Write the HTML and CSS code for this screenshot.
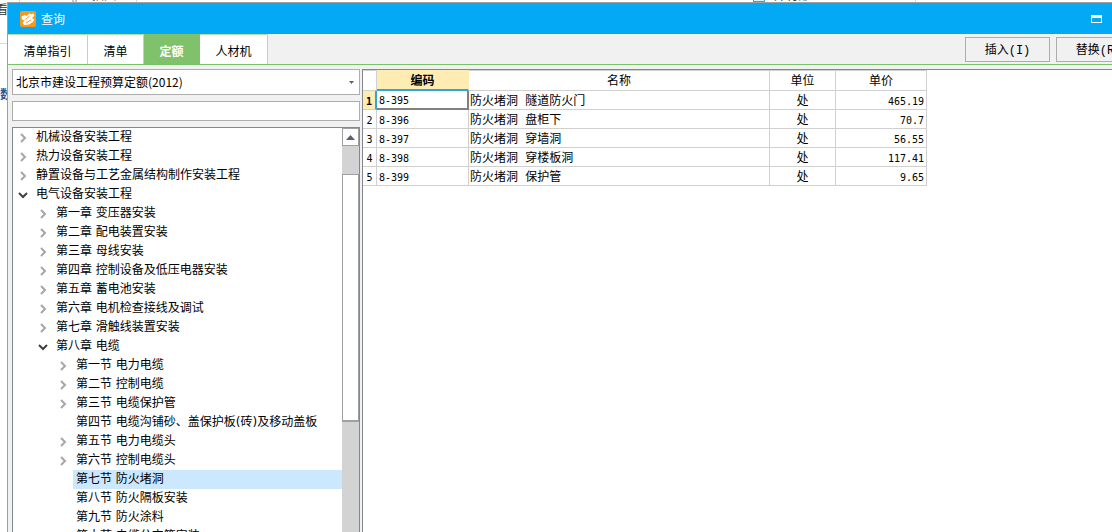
FILE: index.html
```
<!DOCTYPE html>
<html lang="zh-CN">
<head>
<meta charset="utf-8">
<title>查询</title>
<link rel="stylesheet" href="styles.css">
</head>
<body>
<div class="desk">
  <div class="behind-top" aria-hidden="true">
    <span class="group group-a"></span><span class="group group-b"></span><span class="group group-c">插入</span>
    <span class="group group-d"><i class="chip"></i>外材部</span>
  </div>
  <div class="behind-left" aria-hidden="true">
    <span class="behind-tab">看</span>
    <span class="behind-name">数</span>
  </div>
  <main class="window">
    <header class="titlebar">
      <svg class="logo" viewBox="0 0 16 16" aria-hidden="true"><rect width="16" height="16" rx="2" fill="#f79a1c"/><path d="M1.500 5.500 5 4l1.500 1L9.500 2.500l1.500 1L13 2.500l1.500 2L12 7l2 1.500-1 2.500-4 2.500-5 .5-1.500-2L4.500 9.500 2 8.500z" fill="#fff"/><path d="M5.500 8.500 9.500 5M6 12l5-3" stroke="#f79a1c" stroke-width="1" fill="none"/></svg>
      <h1 class="title">查询</h1>
      <button class="restore" aria-label="最大化"><svg viewBox="0 0 11 8"><path d="M0 0h11v8H0zM1 3v4h9V3z" fill="#fff" fill-rule="evenodd"/></svg></button>
    </header>
    <div class="toolbar">
      <nav class="tabs">
        <button class="tab tab-wide">清单指引</button>
        <button class="tab">清单</button>
        <button class="tab active">定额</button>
        <button class="tab">人材机</button>
      </nav>
      <div class="actions">
        <button class="action">插入(I)</button>
        <button class="action">替换(R)</button>
      </div>
    </div>
    <div class="content">
      <aside class="side">
        <div class="picker">
          <select class="library" aria-label="定额库"><option>北京市建设工程预算定额(2012)</option></select>
          <svg class="caret" viewBox="0 0 5 3" aria-hidden="true"><path d="M0 0h5L2.500 3z" fill="#5c5f70"/></svg>
        </div>
        <input class="search" type="text" aria-label="搜索">
        <div class="treebox">
          <ul class="tree">
            <li class="node"><svg class="arrow" viewBox="0 0 10 10"><path d="m3 1 4 4-4 4"/></svg><span class="label">机械设备安装工程</span></li>
            <li class="node"><svg class="arrow" viewBox="0 0 10 10"><path d="m3 1 4 4-4 4"/></svg><span class="label">热力设备安装工程</span></li>
            <li class="node"><svg class="arrow" viewBox="0 0 10 10"><path d="m3 1 4 4-4 4"/></svg><span class="label">静置设备与工艺金属结构制作安装工程</span></li>
            <li class="node"><svg class="arrow open" viewBox="0 0 10 10"><path d="m1 3 4 4 4-4"/></svg><span class="label">电气设备安装工程</span></li>
            <li class="node l1"><svg class="arrow" viewBox="0 0 10 10"><path d="m3 1 4 4-4 4"/></svg><span class="label">第一章 变压器安装</span></li>
            <li class="node l1"><svg class="arrow" viewBox="0 0 10 10"><path d="m3 1 4 4-4 4"/></svg><span class="label">第二章 配电装置安装</span></li>
            <li class="node l1"><svg class="arrow" viewBox="0 0 10 10"><path d="m3 1 4 4-4 4"/></svg><span class="label">第三章 母线安装</span></li>
            <li class="node l1"><svg class="arrow" viewBox="0 0 10 10"><path d="m3 1 4 4-4 4"/></svg><span class="label">第四章 控制设备及低压电器安装</span></li>
            <li class="node l1"><svg class="arrow" viewBox="0 0 10 10"><path d="m3 1 4 4-4 4"/></svg><span class="label">第五章 蓄电池安装</span></li>
            <li class="node l1"><svg class="arrow" viewBox="0 0 10 10"><path d="m3 1 4 4-4 4"/></svg><span class="label">第六章 电机检查接线及调试</span></li>
            <li class="node l1"><svg class="arrow" viewBox="0 0 10 10"><path d="m3 1 4 4-4 4"/></svg><span class="label">第七章 滑触线装置安装</span></li>
            <li class="node l1"><svg class="arrow open" viewBox="0 0 10 10"><path d="m1 3 4 4 4-4"/></svg><span class="label">第八章 电缆</span></li>
            <li class="node l2"><svg class="arrow" viewBox="0 0 10 10"><path d="m3 1 4 4-4 4"/></svg><span class="label">第一节 电力电缆</span></li>
            <li class="node l2"><svg class="arrow" viewBox="0 0 10 10"><path d="m3 1 4 4-4 4"/></svg><span class="label">第二节 控制电缆</span></li>
            <li class="node l2"><svg class="arrow" viewBox="0 0 10 10"><path d="m3 1 4 4-4 4"/></svg><span class="label">第三节 电缆保护管</span></li>
            <li class="node l2"><svg class="arrow" viewBox="0 0 10 10"></svg><span class="label">第四节 电缆沟铺砂、盖保护板(砖)及移动盖板</span></li>
            <li class="node l2"><svg class="arrow" viewBox="0 0 10 10"><path d="m3 1 4 4-4 4"/></svg><span class="label">第五节 电力电缆头</span></li>
            <li class="node l2"><svg class="arrow" viewBox="0 0 10 10"><path d="m3 1 4 4-4 4"/></svg><span class="label">第六节 控制电缆头</span></li>
            <li class="node l2"><svg class="arrow" viewBox="0 0 10 10"></svg><span class="label selected">第七节 防火堵洞</span></li>
            <li class="node l2"><svg class="arrow" viewBox="0 0 10 10"></svg><span class="label">第八节 防火隔板安装</span></li>
            <li class="node l2"><svg class="arrow" viewBox="0 0 10 10"></svg><span class="label">第九节 防火涂料</span></li>
            <li class="node l2"><svg class="arrow" viewBox="0 0 10 10"></svg><span class="label">第十节 电缆分支箱安装</span></li>
          </ul>
          <div class="scroll">
            <button class="scroll-up" aria-label="向上滚动"><svg viewBox="0 0 9 5"><path d="M0 5 4.500 0 9 5z" fill="#5c5f70"/></svg></button>
            <div class="thumb"></div>
          </div>
        </div>
      </aside>
      <section class="results">
        <table class="grid">
          <colgroup><col class="c-no"><col class="c-code"><col class="c-name"><col class="c-unit"><col class="c-price"></colgroup>
          <thead><tr><th></th><th class="current">编码</th><th>名称</th><th>单位</th><th>单价</th></tr></thead>
          <tbody>
            <tr><td class="no current-row">1</td><td class="code focus">8-395</td><td>防火堵洞 隧道防火门</td><td class="unit">处</td><td class="price">465.19</td></tr>
            <tr><td class="no">2</td><td class="code">8-396</td><td>防火堵洞 盘柜下</td><td class="unit">处</td><td class="price">70.7</td></tr>
            <tr><td class="no">3</td><td class="code">8-397</td><td>防火堵洞 穿墙洞</td><td class="unit">处</td><td class="price">56.55</td></tr>
            <tr><td class="no">4</td><td class="code">8-398</td><td>防火堵洞 穿楼板洞</td><td class="unit">处</td><td class="price">117.41</td></tr>
            <tr><td class="no">5</td><td class="code">8-399</td><td>防火堵洞 保护管</td><td class="unit">处</td><td class="price">9.65</td></tr>
          </tbody>
        </table>
      </section>
    </div>
  </main>
</div>
</body>
</html>
```
FILE: styles.css
```
* { box-sizing: border-box; }
body {
  margin: 0;
  background: #fff;
  color: #000;
  font: 12px/18px "Noto Sans CJK SC", sans-serif;
}
button, input, select { font: inherit; color: inherit; margin: 0; padding: 0; border-radius: 0; }
svg { display: block; }

.desk {
  display: grid;
  grid-template: 2px minmax(0, 1fr) / 7px minmax(0, 1fr);
  height: 100vh;
  overflow: hidden;
}
.behind-top {
  grid-column: 1 / 3;
  display: flex;
  align-items: flex-end;
  overflow: hidden;
  color: #333;
}
.group { display: flex; flex: none; align-items: flex-end; height: 16px; border-right: 1px solid #d8d8d8; line-height: 14px; }
.group-a { width: 20px; }
.group-b { width: 57px; border-right: 5px double #c4c4c4; }
.group-c { width: 60px; padding-left: 15px; }
.group-d { width: 779px; padding-left: 616px; }
.chip { width: 12px; height: 12px; margin-right: 9px; border: 1px solid #25aee0; background: #d9f1fb; }
.behind-left { overflow: hidden; }
.behind-tab { display: block; height: 42px; margin-left: -4px; border-bottom: 1px solid #d8d8d8; color: #333; line-height: 14px; }
.behind-name { display: block; margin-top: 41px; color: #245a9b; font-weight: bold; }

.window {
  display: flex;
  flex-direction: column;
  min-width: 0;
  border-top: 1px solid #a0a0a0;
  border-left: 1px solid #a0a0a0;
  background: #f1f1f1;
  overflow: hidden;
}
.titlebar {
  display: flex;
  flex: none;
  align-items: center;
  height: 31px;
  padding: 0 10px 0 12px;
  background: #03a9f4;
  color: #fff;
}
.logo { width: 16px; height: 16px; }
.title { margin: 0 0 0 5px; font-size: 12px; font-weight: normal; }
.restore { margin-left: auto; border: 0; background: none; }
.restore svg { width: 11px; height: 8px; }

.toolbar {
  display: flex;
  flex: none;
  justify-content: space-between;
  align-items: center;
  height: 31px;
  border-bottom: 1px solid #78c369;
}
.tabs { display: flex; height: 30px; }
.tab {
  width: 56px;
  padding-top: 2px;
  border: solid #b5e0a5;
  border-width: 1px 1px 0 0;
  background: #fff;
}
.tab-wide { width: 80px; }
.tab:last-child { width: 68px; }
.tab.active { border-color: #80c26b; background: #80c26b; color: #fff; font-weight: bold; }
.actions { display: flex; gap: 6px; margin-right: -29px; }
.action {
  width: 85px;
  height: 25px;
  padding-top: 3px;
  border: 1px solid #adadad;
  background: #f1f1f1;
  font-family: "Liberation Mono", "Noto Sans CJK SC", monospace;
}

.content { display: flex; flex: 1; min-height: 0; padding: 4px 0 0 4px; }
.side { display: flex; flex: none; flex-direction: column; gap: 6px; width: 348px; }
.picker { display: grid; align-items: center; }
.library {
  grid-area: 1 / 1;
  width: 100%;
  height: 26px;
  padding: 0 3px;
  border: 1px solid #adadad;
  background: #fff;
  appearance: none;
}
.caret { grid-area: 1 / 1; justify-self: end; width: 5px; height: 3px; margin-right: 6px; }
.search { width: 100%; height: 20px; border: 1px solid #adadad; background: #fff; }
.treebox {
  display: flex;
  flex: 1;
  min-height: 0;
  border: solid #828790;
  border-width: 1px 1px 0;
  background: #fff;
}
.tree { flex: 1; min-width: 0; margin: 0; padding: 0; list-style: none; overflow: hidden; font-family: "DejaVu Sans", "Noto Sans CJK SC", sans-serif; }
.node { display: flex; align-items: center; height: 19px; padding-left: 5px; }
.l1 { padding-left: 25px; }
.l2 { padding-left: 45px; }
.arrow { flex: none; width: 10px; height: 10px; margin-right: 5px; fill: none; stroke: #a6a6a6; stroke-width: 2; }
.arrow.open { stroke: #404040; }
.label { flex: 1; padding-left: 3px; line-height: 19px; white-space: nowrap; }
.selected { background: #cce8ff; }
.scroll { flex: none; width: 17px; background: #d3d3d3; }
.scroll-up { display: grid; place-items: center; width: 17px; height: 18px; border: 1px solid #a0a0a0; background: #fff; }
.scroll-up svg { width: 9px; height: 5px; }
.thumb { height: 248px; margin-top: 28px; border: 1px solid #a0a0a0; border-bottom-width: 2px; background: #fff; }

.results { flex: 1; min-width: 0; margin-left: 2px; border: solid #828790; border-width: 1px 0 0 1px; background: #fff; overflow: hidden; }
.grid { width: 564px; border-collapse: separate; border-spacing: 0; table-layout: fixed; font-family: "Liberation Mono", "Noto Sans CJK SC", monospace; }
.c-no { width: 14px; }
.c-code { width: 92px; }
.c-name { width: 301px; }
.c-unit { width: 66px; }
.c-price { width: 91px; }
.grid th, .grid td { border: solid #d0d0d0; border-width: 0 1px 1px 0; white-space: nowrap; overflow: hidden; }
.grid th { height: 21px; padding: 4px 0 0; border-top-width: 1px; font-weight: normal; line-height: 15px; }
.grid td { height: 19px; padding: 4px 0 0 1px; line-height: 14px; }
.grid th.current { border-color: #ffecb3; border-bottom: 2px solid #32a5d8; background: #ffecb3; font-weight: bold; line-height: 14px; }
.grid td.no, .grid td.code, .grid td.price { padding-top: 3px; font-family: "DejaVu Sans Mono", monospace; font-size: 10px; }
.grid td.no { padding-left: 0; text-align: center; }
.grid td.current-row { border-right: 2px solid #32a5d8; background: #ffecb3; font-weight: bold; }
.grid td.code { padding-left: 2px; }
.grid td.focus { border-right: 2px solid #808080; border-bottom: 2px solid #808080; }
.grid td.unit { padding-left: 0; text-align: center; }
.grid td.price { padding-right: 2px; text-align: right; }
```
